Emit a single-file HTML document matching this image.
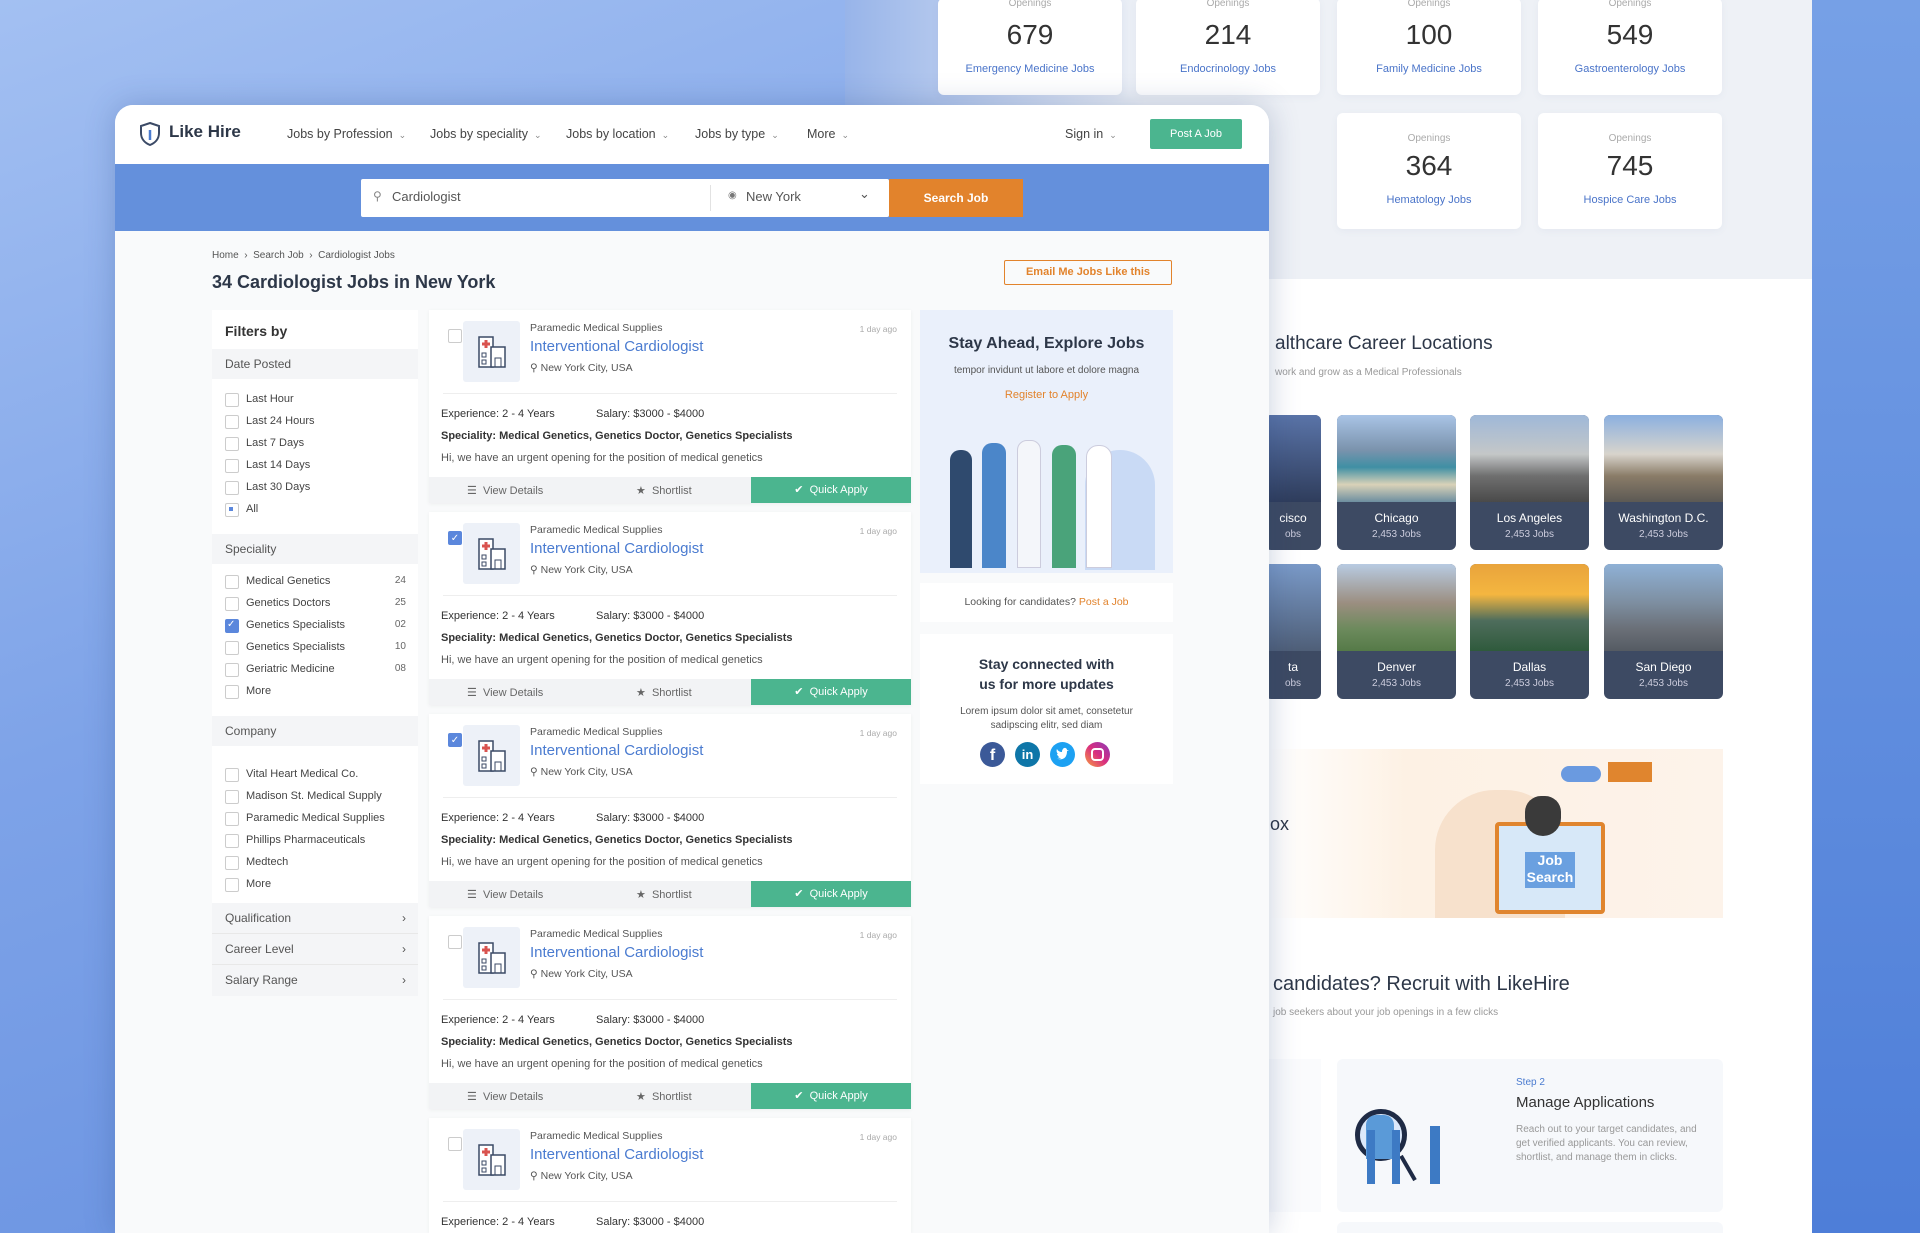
<!DOCTYPE html>
<html><head><meta charset="utf-8"><style>
*{box-sizing:border-box;margin:0;padding:0}
html{width:1920px;height:1233px;overflow:hidden}
body{width:1920px;height:1233px;overflow:hidden;position:relative;font-family:"Liberation Sans",sans-serif;color:#333;background:linear-gradient(160deg,#a3c0f2 0%,#7ea3e8 40%,#5b87dc 100%)}
.a{position:absolute}
.rs{position:absolute;left:1812px;top:0;width:108px;height:1233px;background:linear-gradient(180deg,#76a0e6,#4e7ed8)}
.bp{position:absolute;left:845px;top:0;width:967px;height:1233px;background:#fff;overflow:hidden}
.stat{position:absolute;width:184px;background:#fff;border-radius:6px;text-align:center;box-shadow:0 2px 8px rgba(80,100,150,.06)}
.stat .o{font-size:10px;color:#aaa}
.stat .n{font-size:28px;color:#333;margin-top:10px}
.stat .l{font-size:11px;color:#4a74c9;margin-top:12px}
.city{position:absolute;width:119px;height:135px;border-radius:6px;overflow:hidden;background:#3d4a63;color:#fff;text-align:center}
.city .img{height:87px}
.city b{display:block;font-size:12px;font-weight:normal;margin-top:9px}
.city s{display:block;text-decoration:none;font-size:10px;color:#ccd;margin-top:4px}
.win{position:absolute;left:115px;top:105px;width:1154px;height:1128px;background:#f9fafb;border-radius:18px 18px 0 0;overflow:hidden;box-shadow:0 0 30px rgba(30,60,120,.25)}
.hdr{height:59px;background:#fff;position:relative}
.nav{position:absolute;top:22px;font-size:12.5px;color:#444}
.nav i{font-style:normal;font-size:9px;color:#888;margin-left:6px}
.band{height:67px;background:#6490dc;position:relative}
.filt{position:absolute;left:97px;top:205px;width:206px;background:#fff}
.fh{background:#f4f5f7;color:#555;font-size:12px;padding:0 13px;height:30px;line-height:30px;position:relative}
.fi{height:22px;font-size:11px;color:#444;position:relative;padding-left:34px;line-height:22px}
.fi:before{content:"";position:absolute;left:13px;top:5px;width:12px;height:12px;border:1px solid #ccc;border-radius:2px;background:#fff}
.fi.ck:before{background:#5b87dc;border-color:#5b87dc}
.fi.ck:after{content:"✓";position:absolute;left:15px;top:0;color:#fff;font-size:10px}
.fi.dot:after{content:"";position:absolute;left:17px;top:9px;width:4px;height:4px;background:#5b87dc}
.fi span{position:absolute;right:12px;color:#666;font-size:10px}
.card{position:absolute;left:314px;width:482px;height:193px;background:#fff;box-shadow:0 1px 4px rgba(0,0,0,.05)}
.card .cb{position:absolute;left:19px;top:19px;width:14px;height:14px;border:1px solid #ccc;border-radius:2px}
.card .cb.on{background:#5b87dc;border-color:#5b87dc;color:#fff;font-size:10px;text-align:center;line-height:13px}
.logo{position:absolute;left:34px;top:11px;width:57px;height:61px;background:#edf1f8;border-radius:3px}
.card .co{position:absolute;left:101px;top:12px;font-size:10.5px;color:#555}
.card .t{position:absolute;left:101px;top:28px;font-size:15px;color:#4a7bd0}
.card .lc{position:absolute;left:101px;top:52px;font-size:10.5px;color:#555}
.card .d{position:absolute;right:14px;top:14px;font-size:8.5px;color:#aaa}
.card .hr{position:absolute;left:14px;right:14px;top:83px;border-top:1px solid #eee}
.card .r{position:absolute;left:12px;font-size:11px;color:#333}
.card .ft{position:absolute;left:0;right:0;top:167px;height:26px;background:#f2f3f5;font-size:11px;color:#666}
.qa{position:absolute;left:322px;top:0;width:160px;height:26px;background:#4bb58f;color:#fff;text-align:center;line-height:26px}
.side{position:absolute;background:#fff}
</style></head><body>
<div class="rs"></div>
<div class="bp">
  <div class="a" style="left:0;top:0;width:967px;height:279px;background:#eef1f6"></div>
  <div class="a" style="left:0;top:279px;width:500px;height:954px;background:linear-gradient(90deg,rgba(120,155,225,.9) 0%,rgba(180,200,240,.5) 25%,rgba(255,255,255,0) 60%)"></div>
  <div class="a" style="left:0;top:0;width:300px;height:279px;background:linear-gradient(90deg,rgba(130,165,230,.8),rgba(238,241,246,0))"></div>
  <div class="stat" style="left:93px;top:-2px;height:97px"><div class="o">Openings</div><div class="n">679</div><div class="l">Emergency Medicine Jobs</div></div>
  <div class="stat" style="left:291px;top:-2px;height:97px"><div class="o">Openings</div><div class="n">214</div><div class="l">Endocrinology Jobs</div></div>
  <div class="stat" style="left:492px;top:-2px;height:97px"><div class="o">Openings</div><div class="n">100</div><div class="l">Family Medicine Jobs</div></div>
  <div class="stat" style="left:693px;top:-2px;height:97px"><div class="o">Openings</div><div class="n">549</div><div class="l">Gastroenterology Jobs</div></div>
  <div class="stat" style="left:492px;top:113px;height:116px;padding-top:20px"><div class="o">Openings</div><div class="n" style="margin-top:6px">364</div><div class="l">Hematology Jobs</div></div>
  <div class="stat" style="left:693px;top:113px;height:116px;padding-top:20px"><div class="o">Openings</div><div class="n" style="margin-top:6px">745</div><div class="l">Hospice Care Jobs</div></div>
  <div class="a" style="left:430px;top:333px;font-size:19px;color:#2d3748">althcare Career Locations</div>
  <div class="a" style="left:430px;top:367px;font-size:10px;color:#999">work and grow as a Medical Professionals</div>
  <div class="city" style="left:420px;top:415px;width:56px"><div class="img" style="background:linear-gradient(#5a74a8,#2f3d5c)"></div><b>cisco</b><s>obs</s></div>
  <div class="city" style="left:492px;top:415px"><div class="img" style="background:linear-gradient(#a9c4e6 0%,#7b93ad 40%,#3f8fa4 60%,#d9d2b8 80%,#6d8ea0)"></div><b>Chicago</b><s>2,453 Jobs</s></div>
  <div class="city" style="left:625px;top:415px"><div class="img" style="background:linear-gradient(#9fb8d8,#c4c7c8 45%,#6f6f6f 70%,#4a4a4a)"></div><b>Los Angeles</b><s>2,453 Jobs</s></div>
  <div class="city" style="left:759px;top:415px"><div class="img" style="background:linear-gradient(#8bb0e0,#d8d4cc 45%,#8a7c68 70%,#5c5954)"></div><b>Washington D.C.</b><s>2,453 Jobs</s></div>
  <div class="city" style="left:420px;top:564px;width:56px"><div class="img" style="background:linear-gradient(#7a9ac8,#4f5f78)"></div><b>ta</b><s>obs</s></div>
  <div class="city" style="left:492px;top:564px"><div class="img" style="background:linear-gradient(#b8cbe2,#9b8e80 45%,#6c8a5c 75%,#557a48)"></div><b>Denver</b><s>2,453 Jobs</s></div>
  <div class="city" style="left:625px;top:564px"><div class="img" style="background:linear-gradient(#e9a43c,#f4b640 35%,#4e6d5c 65%,#2f5a3c)"></div><b>Dallas</b><s>2,453 Jobs</s></div>
  <div class="city" style="left:759px;top:564px"><div class="img" style="background:linear-gradient(#8fb1d6,#7d8ea0 45%,#6a6f77 75%,#555b63)"></div><b>San Diego</b><s>2,453 Jobs</s></div>
  <div class="a" style="left:424px;top:749px;width:454px;height:169px;background:linear-gradient(90deg,rgba(253,243,234,0),#fdf1e4 30%,#fdf3ea)"></div>
  <div class="a" style="left:590px;top:790px;width:130px;height:128px;border-radius:60px 60px 0 0;background:#f7e1cc"></div>
  <div class="a" style="left:650px;top:822px;width:110px;height:92px;border:4px solid #e0852e;border-radius:4px;background:#d7e8f8"></div>
  <div class="a" style="left:680px;top:796px;width:36px;height:40px;border-radius:16px 16px 18px 18px;background:#3a3a3a"></div>
  <div class="a" style="left:680px;top:852px;width:50px;height:36px;background:#6aa0e0;color:#fff;font-size:14px;font-weight:bold;text-align:center;line-height:17px">Job<br>Search</div>
  <div class="a" style="left:716px;top:766px;width:40px;height:16px;border-radius:8px;background:#6a9ae0"></div>
  <div class="a" style="left:763px;top:762px;width:44px;height:20px;background:#e0852e"></div>
  <div class="a" style="left:425px;top:814px;font-size:18px;color:#2d3748">ox</div>
  <div class="a" style="left:428px;top:973px;font-size:20px;color:#2d3748">candidates? Recruit with LikeHire</div>
  <div class="a" style="left:428px;top:1007px;font-size:10px;color:#999">job seekers about your job openings in a few clicks</div>
  <div class="a" style="left:492px;top:1059px;width:386px;height:153px;background:#f6f8fb;border-radius:6px"></div>
  <div class="a" style="left:420px;top:1059px;width:56px;height:153px;background:rgba(246,248,251,.6)"></div>
  <div class="a" style="left:510px;top:1109px;width:52px;height:52px;border:5px solid #1f2b45;border-radius:50%;background:#dbe8fa"></div>
  <div class="a" style="left:521px;top:1115px;width:28px;height:44px;background:#5a9ad8;border-radius:10px 10px 0 0"></div>
  <div class="a" style="top:1154px;width:4px;height:28px;background:#1f2b45;transform:rotate(-30deg);left:561px"></div>
  <div class="a" style="left:522px;top:1130px;width:8px;height:54px;background:#3d7ac4"></div>
  <div class="a" style="left:547px;top:1130px;width:8px;height:54px;background:#3d7ac4"></div>
  <div class="a" style="left:585px;top:1126px;width:10px;height:58px;background:#3d7ac4"></div>
  <div class="a" style="left:671px;top:1077px;font-size:10px;color:#4a7bd0">Step 2</div>
  <div class="a" style="left:671px;top:1094px;font-size:15px;color:#333">Manage Applications</div>
  <div class="a" style="left:671px;top:1123px;width:185px;font-size:10px;line-height:14px;color:#999">Reach out to your target candidates, and get verified applicants. You can review, shortlist, and manage them in clicks.</div>
  <div class="a" style="left:492px;top:1222px;width:386px;height:20px;background:#f6f8fb;border-radius:6px"></div>
</div>

<div class="win">
  <div class="hdr">
    <svg class="a" style="left:24px;top:17px" width="22" height="24" viewBox="0 0 22 24"><path d="M11 1 L20 4 V11 C20 17 16 21 11 23 C6 21 2 17 2 11 V4 Z" fill="none" stroke="#3b4a66" stroke-width="2"/><path d="M11 8 V18" stroke="#4a7bd0" stroke-width="2.5"/></svg>
    <div class="a" style="left:54px;top:17px;font-size:17px;font-weight:bold;color:#2d3748">Like Hire</div>
    <div class="nav" style="left:172px">Jobs by Profession<i>⌄</i></div>
    <div class="nav" style="left:315px">Jobs by speciality<i>⌄</i></div>
    <div class="nav" style="left:451px">Jobs by location<i>⌄</i></div>
    <div class="nav" style="left:580px">Jobs by type<i>⌄</i></div>
    <div class="nav" style="left:692px">More<i>⌄</i></div>
    <div class="nav" style="left:950px">Sign in<i>⌄</i></div>
    <div class="a" style="left:1035px;top:14px;width:92px;height:30px;background:#4bb58f;border-radius:2px;color:#fff;font-size:11px;text-align:center;line-height:30px">Post A Job</div>
  </div>
  <div class="band">
    <div class="a" style="left:246px;top:15px;width:528px;height:38px;background:#fff;border-radius:2px"></div>
    <div class="a" style="left:258px;top:25px;font-size:12px;color:#888">⚲</div>
    <div class="a" style="left:277px;top:25px;font-size:13px;color:#555">Cardiologist</div>
    <div class="a" style="left:595px;top:21px;width:1px;height:26px;background:#e2e2e2"></div>
    <div class="a" style="left:613px;top:26px;font-size:10px;color:#777">◉</div>
    <div class="a" style="left:631px;top:25px;font-size:13px;color:#555">New York</div>
    <div class="a" style="left:744px;top:22px;font-size:13px;color:#555">⌄</div>
    <div class="a" style="left:774px;top:15px;width:134px;height:38px;background:#e2832c;color:#fff;font-size:12px;font-weight:bold;text-align:center;line-height:38px">Search Job</div>
  </div>
  <div class="a" style="left:97px;top:145px;font-size:10px;color:#555">Home &nbsp;›&nbsp; Search Job &nbsp;›&nbsp; Cardiologist Jobs</div>
  <div class="a" style="left:97px;top:167px;font-size:18px;font-weight:bold;color:#2d3748">34 Cardiologist Jobs in New York</div>
  <div class="a" style="left:889px;top:155px;width:168px;height:25px;border:1.5px solid #e2832c;border-radius:2px;color:#e2832c;font-size:11px;font-weight:bold;text-align:center;line-height:22px">Email Me Jobs Like this</div>

  <div class="filt">
    <div style="height:39px;padding:13px 13px;font-size:14px;font-weight:bold;color:#333">Filters by</div>
    <div class="fh">Date Posted</div>
    <div style="height:9px"></div>
    <div class="fi">Last Hour</div><div class="fi">Last 24 Hours</div><div class="fi">Last 7 Days</div><div class="fi">Last 14 Days</div><div class="fi">Last 30 Days</div><div class="fi dot">All</div>
    <div style="height:14px"></div>
    <div class="fh">Speciality</div>
    <div style="height:6px"></div>
    <div class="fi">Medical Genetics<span>24</span></div><div class="fi">Genetics Doctors<span>25</span></div><div class="fi ck">Genetics Specialists<span>02</span></div><div class="fi">Genetics Specialists<span>10</span></div><div class="fi">Geriatric Medicine<span>08</span></div><div class="fi">More</div>
    <div style="height:14px"></div>
    <div class="fh">Company</div>
    <div style="height:17px"></div>
    <div class="fi">Vital Heart Medical Co.</div><div class="fi">Madison St. Medical Supply</div><div class="fi">Paramedic Medical Supplies</div><div class="fi">Phillips Pharmaceuticals</div><div class="fi">Medtech</div><div class="fi">More</div>
    <div style="height:8px"></div>
    <div class="fh" style="height:31px;line-height:31px;border-bottom:1px solid #e8e8e8">Qualification<span style="position:absolute;right:12px">›</span></div>
    <div class="fh" style="height:31px;line-height:31px;border-bottom:1px solid #e8e8e8">Career Level<span style="position:absolute;right:12px">›</span></div>
    <div class="fh" style="height:31px;line-height:31px">Salary Range<span style="position:absolute;right:12px">›</span></div>
  </div>

  <div class="card" style="top:205px"><div class="cb"></div><div class="logo"><svg width="57" height="61" viewBox="0 0 57 61"><rect x="16" y="16" width="14" height="30" fill="#fff" stroke="#3b4a66" stroke-width="1.5"/><rect x="28" y="26" width="14" height="20" fill="#fff" stroke="#3b4a66" stroke-width="1.5"/><path d="M23 19v8M19 23h8" stroke="#d9534f" stroke-width="3"/><rect x="19" y="32" width="4" height="4" fill="none" stroke="#3b4a66"/><rect x="19" y="39" width="4" height="4" fill="none" stroke="#3b4a66"/><rect x="32" y="37" width="6" height="9" fill="none" stroke="#3b4a66"/></svg></div><div class="co">Paramedic Medical Supplies</div><div class="t">Interventional Cardiologist</div><div class="lc">⚲ New York City, USA</div><div class="d">1 day ago</div><div class="hr"></div><div class="r" style="top:98px">Experience: 2 - 4 Years<span style="position:absolute;left:155px;white-space:nowrap">Salary: $3000 - $4000</span></div><div class="r" style="top:120px;font-weight:bold">Speciality: Medical Genetics, Genetics Doctor, Genetics Specialists</div><div class="r" style="top:142px;color:#555">Hi, we have an urgent opening for the position of medical genetics</div><div class="ft"><span class="a" style="left:38px;top:7px">☰ &nbsp;View Details</span><span class="a" style="left:207px;top:7px">★ &nbsp;Shortlist</span><div class="qa">✔ &nbsp;Quick Apply</div></div></div>

  <div class="card" style="top:407px"><div class="cb on">✓</div><div class="logo"><svg width="57" height="61" viewBox="0 0 57 61"><rect x="16" y="16" width="14" height="30" fill="#fff" stroke="#3b4a66" stroke-width="1.5"/><rect x="28" y="26" width="14" height="20" fill="#fff" stroke="#3b4a66" stroke-width="1.5"/><path d="M23 19v8M19 23h8" stroke="#d9534f" stroke-width="3"/><rect x="19" y="32" width="4" height="4" fill="none" stroke="#3b4a66"/><rect x="19" y="39" width="4" height="4" fill="none" stroke="#3b4a66"/><rect x="32" y="37" width="6" height="9" fill="none" stroke="#3b4a66"/></svg></div><div class="co">Paramedic Medical Supplies</div><div class="t">Interventional Cardiologist</div><div class="lc">⚲ New York City, USA</div><div class="d">1 day ago</div><div class="hr"></div><div class="r" style="top:98px">Experience: 2 - 4 Years<span style="position:absolute;left:155px;white-space:nowrap">Salary: $3000 - $4000</span></div><div class="r" style="top:120px;font-weight:bold">Speciality: Medical Genetics, Genetics Doctor, Genetics Specialists</div><div class="r" style="top:142px;color:#555">Hi, we have an urgent opening for the position of medical genetics</div><div class="ft"><span class="a" style="left:38px;top:7px">☰ &nbsp;View Details</span><span class="a" style="left:207px;top:7px">★ &nbsp;Shortlist</span><div class="qa">✔ &nbsp;Quick Apply</div></div></div>

  <div class="card" style="top:609px"><div class="cb on">✓</div><div class="logo"><svg width="57" height="61" viewBox="0 0 57 61"><rect x="16" y="16" width="14" height="30" fill="#fff" stroke="#3b4a66" stroke-width="1.5"/><rect x="28" y="26" width="14" height="20" fill="#fff" stroke="#3b4a66" stroke-width="1.5"/><path d="M23 19v8M19 23h8" stroke="#d9534f" stroke-width="3"/><rect x="19" y="32" width="4" height="4" fill="none" stroke="#3b4a66"/><rect x="19" y="39" width="4" height="4" fill="none" stroke="#3b4a66"/><rect x="32" y="37" width="6" height="9" fill="none" stroke="#3b4a66"/></svg></div><div class="co">Paramedic Medical Supplies</div><div class="t">Interventional Cardiologist</div><div class="lc">⚲ New York City, USA</div><div class="d">1 day ago</div><div class="hr"></div><div class="r" style="top:98px">Experience: 2 - 4 Years<span style="position:absolute;left:155px;white-space:nowrap">Salary: $3000 - $4000</span></div><div class="r" style="top:120px;font-weight:bold">Speciality: Medical Genetics, Genetics Doctor, Genetics Specialists</div><div class="r" style="top:142px;color:#555">Hi, we have an urgent opening for the position of medical genetics</div><div class="ft"><span class="a" style="left:38px;top:7px">☰ &nbsp;View Details</span><span class="a" style="left:207px;top:7px">★ &nbsp;Shortlist</span><div class="qa">✔ &nbsp;Quick Apply</div></div></div>

  <div class="card" style="top:811px"><div class="cb"></div><div class="logo"><svg width="57" height="61" viewBox="0 0 57 61"><rect x="16" y="16" width="14" height="30" fill="#fff" stroke="#3b4a66" stroke-width="1.5"/><rect x="28" y="26" width="14" height="20" fill="#fff" stroke="#3b4a66" stroke-width="1.5"/><path d="M23 19v8M19 23h8" stroke="#d9534f" stroke-width="3"/><rect x="19" y="32" width="4" height="4" fill="none" stroke="#3b4a66"/><rect x="19" y="39" width="4" height="4" fill="none" stroke="#3b4a66"/><rect x="32" y="37" width="6" height="9" fill="none" stroke="#3b4a66"/></svg></div><div class="co">Paramedic Medical Supplies</div><div class="t">Interventional Cardiologist</div><div class="lc">⚲ New York City, USA</div><div class="d">1 day ago</div><div class="hr"></div><div class="r" style="top:98px">Experience: 2 - 4 Years<span style="position:absolute;left:155px;white-space:nowrap">Salary: $3000 - $4000</span></div><div class="r" style="top:120px;font-weight:bold">Speciality: Medical Genetics, Genetics Doctor, Genetics Specialists</div><div class="r" style="top:142px;color:#555">Hi, we have an urgent opening for the position of medical genetics</div><div class="ft"><span class="a" style="left:38px;top:7px">☰ &nbsp;View Details</span><span class="a" style="left:207px;top:7px">★ &nbsp;Shortlist</span><div class="qa">✔ &nbsp;Quick Apply</div></div></div>

  <div class="card" style="top:1013px;height:115px"><div class="cb"></div><div class="logo"><svg width="57" height="61" viewBox="0 0 57 61"><rect x="16" y="16" width="14" height="30" fill="#fff" stroke="#3b4a66" stroke-width="1.5"/><rect x="28" y="26" width="14" height="20" fill="#fff" stroke="#3b4a66" stroke-width="1.5"/><path d="M23 19v8M19 23h8" stroke="#d9534f" stroke-width="3"/><rect x="19" y="32" width="4" height="4" fill="none" stroke="#3b4a66"/><rect x="19" y="39" width="4" height="4" fill="none" stroke="#3b4a66"/><rect x="32" y="37" width="6" height="9" fill="none" stroke="#3b4a66"/></svg></div><div class="co">Paramedic Medical Supplies</div><div class="t">Interventional Cardiologist</div><div class="lc">⚲ New York City, USA</div><div class="d">1 day ago</div><div class="hr"></div><div class="r" style="top:98px">Experience: 2 - 4 Years<span style="position:absolute;left:155px;white-space:nowrap">Salary: $3000 - $4000</span></div></div>

  <div class="side" style="left:805px;top:205px;width:253px;height:263px;background:#eaf0fb">
    <div class="a" style="left:0;width:253px;top:25px;text-align:center;font-size:16px;font-weight:bold;color:#2d3748">Stay Ahead, Explore Jobs</div>
    <div class="a" style="left:0;width:253px;top:55px;text-align:center;font-size:10px;color:#555">tempor invidunt ut labore et dolore magna</div>
    <div class="a" style="left:0;width:253px;top:79px;text-align:center;font-size:11px;color:#e2832c">Register to Apply</div>
    <div class="a" style="left:165px;top:140px;width:70px;height:120px;border-radius:35px 35px 0 0;background:#c9daf5"></div>
    <div class="a" style="left:30px;top:140px;width:22px;height:118px;background:#2f4a6e;border-radius:10px 10px 0 0"></div>
    <div class="a" style="left:62px;top:133px;width:24px;height:125px;background:#4b86c9;border-radius:10px 10px 0 0"></div>
    <div class="a" style="left:97px;top:130px;width:24px;height:128px;background:#f4f6fa;border:1px solid #ccd;border-radius:10px 10px 0 0"></div>
    <div class="a" style="left:132px;top:135px;width:24px;height:123px;background:#4aa37a;border-radius:10px 10px 0 0"></div>
    <div class="a" style="left:166px;top:135px;width:26px;height:123px;background:#fff;border:1px solid #ccd;border-radius:12px 12px 0 0"></div>
  </div>
  <div class="side" style="left:805px;top:478px;width:253px;height:39px;text-align:center;font-size:10.5px;line-height:39px;color:#555">Looking for candidates? <span style="color:#e2832c">Post a Job</span></div>
  <div class="side" style="left:805px;top:529px;width:253px;height:150px">
    <div class="a" style="left:0;width:253px;top:20px;text-align:center;font-size:14px;font-weight:bold;color:#2d3748;line-height:20px">Stay connected with<br>us for more updates</div>
    <div class="a" style="left:0;width:253px;top:71px;text-align:center;font-size:10px;color:#555;line-height:14px">Lorem ipsum dolor sit amet, consetetur<br>sadipscing elitr, sed diam</div>
    <div class="a" style="left:60px;top:108px;width:25px;height:25px;border-radius:50%;background:#3b5998;color:#fff;text-align:center;font:bold 16px/27px 'Liberation Sans'">f</div>
    <div class="a" style="left:95px;top:108px;width:25px;height:25px;border-radius:50%;background:#0e76a8;color:#fff;text-align:center;font:bold 13px/25px 'Liberation Sans'">in</div>
    <div class="a" style="left:130px;top:108px;width:25px;height:25px;border-radius:50%;background:#1da1f2"><svg width="25" height="25" viewBox="0 0 25 25"><path d="M6 16c3 2 8 2 10-2 1-2 1-4 1-5l2-1-2 0c0-2-3-3-4-1-1 1-1 2-1 3-2 0-4-1-5-3-1 2 0 4 1 5l-1 0c0 1 1 2 2 3l-1 0c1 1 2 1 3 1-1 1-3 1-5 0z" fill="#fff"/></svg></div>
    <div class="a" style="left:165px;top:108px;width:25px;height:25px;border-radius:50%;background:linear-gradient(45deg,#f9a03f,#d92e7f,#8a3ab9)"><div style="margin:6px;width:13px;height:13px;border:2px solid #fff;border-radius:4px"></div></div>
  </div>
</div>
</body></html>
